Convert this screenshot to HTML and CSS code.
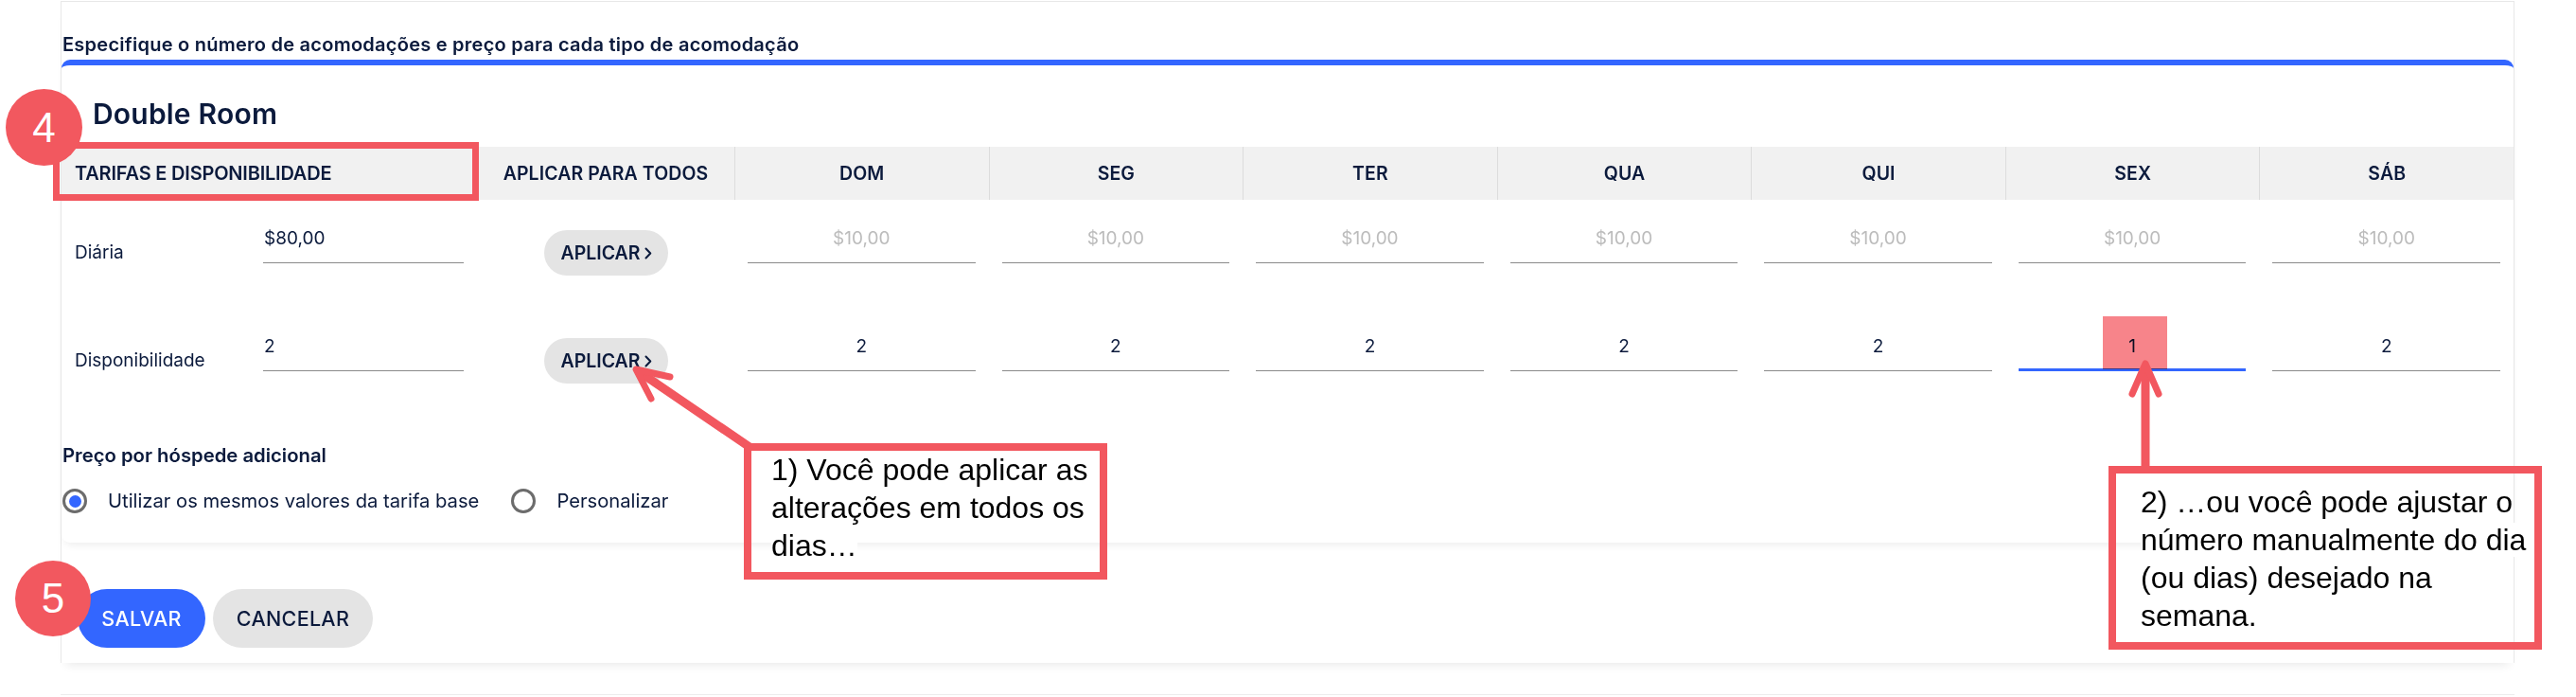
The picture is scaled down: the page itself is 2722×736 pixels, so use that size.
FILE: index.html
```html
<!DOCTYPE html>
<html lang="pt-BR">
<head>
<meta charset="utf-8">
<title>Tarifas e disponibilidade</title>
<link rel="stylesheet" href="styles.css">
</head>
<body>
  <section class="panel">
    <h2 class="panel-title">Especifique o número de acomodações e preço para cada tipo de acomodação</h2>
    <div class="room-card">
      <h3 class="room-name">Double Room</h3>
      <div class="rates">
        <div class="th th-first">TARIFAS E DISPONIBILIDADE</div>
        <div class="th th-apply">APLICAR PARA TODOS</div>
        <div class="th th-day">DOM</div>
        <div class="th th-day">SEG</div>
        <div class="th th-day">TER</div>
        <div class="th th-day">QUA</div>
        <div class="th th-day">QUI</div>
        <div class="th th-day">SEX</div>
        <div class="th th-day">SÁB</div>

        <div class="td td-label">Diária</div>
        <div class="td"><div class="field">$80,00</div></div>
        <div class="td td-apply"><button class="apply-btn">APLICAR<svg class="chev" width="8" height="13" viewBox="0 0 8 13"><path d="M1.5 1.5 L6.3 6.5 L1.5 11.5" fill="none" stroke="#0b1a3c" stroke-width="2" stroke-linecap="round" stroke-linejoin="round"/></svg></button></div>
        <div class="td"><div class="field center muted">$10,00</div></div>
        <div class="td"><div class="field center muted">$10,00</div></div>
        <div class="td"><div class="field center muted">$10,00</div></div>
        <div class="td"><div class="field center muted">$10,00</div></div>
        <div class="td"><div class="field center muted">$10,00</div></div>
        <div class="td"><div class="field center muted">$10,00</div></div>
        <div class="td"><div class="field center muted">$10,00</div></div>

        <div class="td td-label">Disponibilidade</div>
        <div class="td"><div class="field">2</div></div>
        <div class="td td-apply"><button class="apply-btn">APLICAR<svg class="chev" width="8" height="13" viewBox="0 0 8 13"><path d="M1.5 1.5 L6.3 6.5 L1.5 11.5" fill="none" stroke="#0b1a3c" stroke-width="2" stroke-linecap="round" stroke-linejoin="round"/></svg></button></div>
        <div class="td"><div class="field center">2</div></div>
        <div class="td"><div class="field center">2</div></div>
        <div class="td"><div class="field center">2</div></div>
        <div class="td"><div class="field center">2</div></div>
        <div class="td"><div class="field center">2</div></div>
        <div class="td"><div class="field center focused">1</div></div>
        <div class="td"><div class="field center">2</div></div>
      </div>

      <div class="extra">
        <h4 class="extra-title">Preço por hóspede adicional</h4>
        <div class="radios">
          <label class="radio"><span class="radio-dot checked"></span><span>Utilizar os mesmos valores da tarifa base</span></label>
          <label class="radio"><span class="radio-dot"></span><span>Personalizar</span></label>
        </div>
      </div>
    </div>
    <div class="actions">
      <button class="btn btn-primary">SALVAR</button>
      <button class="btn btn-secondary">CANCELAR</button>
    </div>
  </section>
  <div class="next-panel"></div>

  <!-- annotation overlays -->
  <div class="mark-box"></div>
  <div class="mark-cell"></div>
  <div class="badge badge-4">4</div>
  <div class="badge badge-5">5</div>
  <svg class="arrows" width="2722" height="736" viewBox="0 0 2722 736">
    <g fill="none" stroke="#f2575f" stroke-linecap="round" stroke-linejoin="round">
      <line x1="792" y1="472" x2="676" y2="393" stroke-width="9"/>
      <polyline points="708,398 672,390 688,421" stroke-width="7"/>
      <line x1="2267" y1="494" x2="2267" y2="390" stroke-width="9"/>
      <polyline points="2253,416 2267,384 2281,416" stroke-width="7"/>
    </g>
  </svg>
  <div class="callout callout-1"><span>1) Você pode aplicar as<br>alterações em todos os<br>dias…</span></div>
  <div class="callout callout-2"><span>2) …ou você pode ajustar o<br>número manualmente do dia<br>(ou dias) desejado na<br>semana.</span></div>
</body>
</html>
```

FILE: styles.css
```css
* { box-sizing: border-box; }

html, body {
  margin: 0;
  padding: 0;
  background: #ffffff;
}

body {
  position: relative;
  width: 2722px;
  height: 736px;
  overflow: hidden;
  font-family: Inter, "Noto Sans", sans-serif;
  color: #0b1a3c;
}

/* ---------- panel ---------- */
.panel {
  margin: 1px 65px 0 64px;
  border: 1px solid #e8e8e8;
  border-bottom: none;
  padding: 0 0 16px 0;
  box-shadow: 0 8px 10px -6px rgba(0, 0, 0, 0.09);
}

.panel-title {
  margin: 0 0 4px 0;
  padding: 33px 0 0 1px;
  font-size: 20px;
  line-height: 24px;
  font-weight: 600;
  letter-spacing: 0.25px;
}

.room-card {
  background: #fff;
  border-top: 6px solid #3366ff;
  border-radius: 9px;
  box-shadow: 0 6px 8px -4px rgba(0, 0, 0, 0.08);
  padding: 35px 0 31px 0;
}

.room-name {
  margin: 0 0 19px 0;
  padding-left: 33px;
  font-size: 30px;
  line-height: 32px;
  font-weight: 600;
  letter-spacing: 0.2px;
}

/* ---------- rates grid ---------- */
.rates {
  display: grid;
  grid-template-columns: 199px 240px 272px repeat(7, 1fr);
}

.th {
  height: 56px;
  background: #f1f1f1;
  display: flex;
  align-items: center;
  justify-content: center;
  font-size: 19.5px;
  font-weight: 600;
  letter-spacing: 0.1px;
}

.th-first {
  grid-column: span 2;
  justify-content: flex-start;
  padding-left: 14px;
  font-size: 20px;
  letter-spacing: -0.2px;
}

.th-day {
  border-left: 1px solid #dcdcdc;
}

.td {
  height: 114px;
  padding: 0 14px;
}

.td-label {
  padding-top: 45px;
  font-size: 19px;
  line-height: 22px;
}

.field {
  margin-top: 30px;
  height: 37px;
  border-bottom: 1px solid #8a8a8a;
  font-size: 19px;
  line-height: 22px;
  padding-left: 1px;
}

.field.center {
  text-align: center;
  padding-left: 0;
}

.field.muted {
  color: #bcbcbc;
}

.field.focused {
  height: 37px;
  border-bottom: 3px solid #3366ff;
}

.td-apply {
  display: flex;
  justify-content: center;
  align-items: flex-start;
}

.apply-btn {
  margin-top: 32px;
  width: 131px;
  height: 48px;
  border: none;
  border-radius: 24px;
  background: #e4e4e4;
  color: #0b1a3c;
  font-family: Inter, "Noto Sans", sans-serif;
  font-size: 19.5px;
  font-weight: 600;
  display: flex;
  align-items: center;
  justify-content: center;
  gap: 5px;
  padding: 0 0 0 2px;
}

.chev {
  display: block;
}

/* ---------- extra guest price ---------- */
.extra {
  padding: 31px 0 0 1px;
}

.extra-title {
  margin: 0 0 24px 0;
  font-size: 20.3px;
  line-height: 22px;
  font-weight: 600;
}

.radios {
  display: flex;
  align-items: center;
  gap: 34px;
}

.radio {
  display: flex;
  align-items: center;
  gap: 22px;
  font-size: 20.2px;
  line-height: 26px;
}

.radio-dot {
  width: 26px;
  height: 26px;
  border-radius: 50%;
  border: 3px solid #6c6c6c;
  display: flex;
  align-items: center;
  justify-content: center;
}

.radio-dot.checked::after {
  content: "";
  width: 13px;
  height: 13px;
  border-radius: 50%;
  background: #3366ff;
}

/* ---------- actions ---------- */
.actions {
  margin-top: 49px;
  padding-left: 17px;
  display: flex;
  gap: 8px;
}

.btn {
  height: 62px;
  border: none;
  border-radius: 31px;
  font-family: Inter, "Noto Sans", sans-serif;
  font-size: 21.5px;
  font-weight: 500;
  letter-spacing: 0.3px;
}

.btn-primary {
  width: 135px;
  background: #3366ff;
  color: #ffffff;
}

.btn-secondary {
  width: 169px;
  background: #e4e4e4;
  color: #0b1a3c;
}

.next-panel {
  margin: 33px 65px 0 64px;
  height: 10px;
  border-top: 1px solid #ececec;
}

/* ---------- annotations (overlay) ---------- */
.badge {
  position: absolute;
  border-radius: 50%;
  background: #f2585f;
  color: #ffffff;
  font-family: "Liberation Sans", Arial, sans-serif;
  font-size: 44px;
  display: flex;
  align-items: center;
  justify-content: center;
}

.badge-4 {
  left: 6px;
  top: 94px;
  width: 81px;
  height: 81px;
}

.badge-5 {
  left: 16px;
  top: 592px;
  width: 80px;
  height: 80px;
}

.mark-box {
  position: absolute;
  left: 56px;
  top: 150px;
  width: 450px;
  height: 62px;
  border: 7px solid #f2575f;
}

.mark-cell {
  position: absolute;
  left: 2222px;
  top: 334px;
  width: 68px;
  height: 56px;
  background: #f7848a;
  mix-blend-mode: multiply;
}

.arrows {
  position: absolute;
  left: 0;
  top: 0;
  pointer-events: none;
}

.callout {
  position: absolute;
  border: 8px solid #f2575f;
  font-family: "Liberation Sans", Arial, sans-serif;
  font-size: 32px;
  line-height: 40px;
  color: #000000;
}

.callout span {
  background: #ffffff;
}

.callout-1 {
  left: 786px;
  top: 468px;
  width: 384px;
  height: 144px;
  padding: 0 0 0 21px;
}

.callout-2 {
  left: 2228px;
  top: 492px;
  width: 458px;
  height: 194px;
  padding: 10px 0 0 26px;
}
```
